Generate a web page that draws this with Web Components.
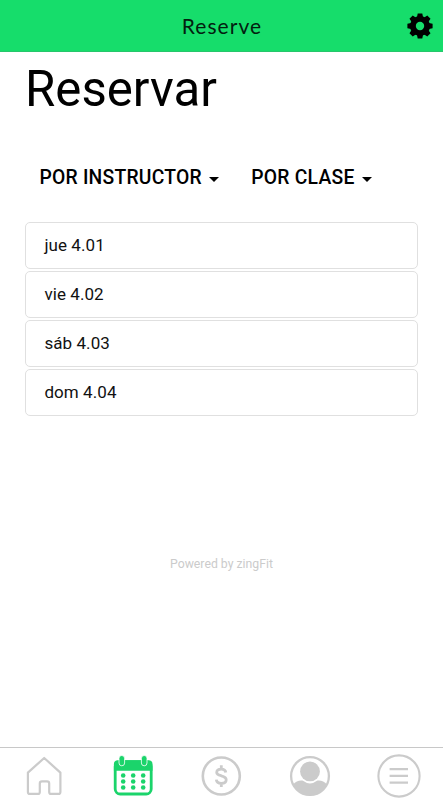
<!DOCTYPE html>
<html lang="es"><head><meta charset="utf-8"><title>Reserve</title>
<style>html,body{margin:0;height:100%;background:#fff}body{font-family:Roboto,sans-serif;color:#000;overflow:hidden}</style></head>
<body>
<booking-app></booking-app>
<script>
const define = (name, html) => customElements.define(name, class extends HTMLElement {
  constructor() {
    super();
    const t = document.createElement('template');
    t.innerHTML = html;
    this.attachShadow({mode: 'open'}).append(t.content.cloneNode(true));
  }
});

define('app-header', `<style>
:host{display:grid;grid-template-columns:40px 1fr 40px;align-items:center;height:52px;box-sizing:border-box;background:#16dd6b;border-bottom:1px solid #27c66c;flex:none}
.title{grid-column:2;text-align:center;font:400 21px/24px Lato,sans-serif;letter-spacing:1.05px;color:#03200f;padding-left:1px}
svg{display:block;justify-self:end;margin-right:10px}
</style><div class="title"><slot></slot></div>
<svg width="26" height="26" viewBox="-13 -13 26 26"><g fill="#000"><circle r="10"/>
<path d="M-3-9 -2.3-12.6H2.3L3-9V9L2.3 12.6H-2.3L-3 9ZM-9-3-12.6-2.3V2.3L-9 3H9L12.6 2.3V-2.3L9-3Z"/>
<path transform="rotate(45)" d="M-3-9 -2.3-12.6H2.3L3-9V9L2.3 12.6H-2.3L-3 9ZM-9-3-12.6-2.3V2.3L-9 3H9L12.6 2.3V-2.3L9-3Z"/></g><circle r="4.2" fill="#16dd6b"/></svg>`);

define('filter-menu', `<style>
:host{display:flex;align-items:center;font-size:19.3px;letter-spacing:.25px;line-height:24px;font-weight:500;white-space:nowrap}
i{width:0;height:0;margin:2px 0 0 7.3px;border:5px solid transparent;border-top:5px solid #000;border-bottom:0}
</style><slot></slot><i></i>`);

define('day-row', `<style>
:host{display:flex;align-items:center;box-sizing:border-box;height:47px;padding:0 0 1px 18.4px;border:1px solid #e0e0e0;border-radius:5px;font-size:17px;letter-spacing:.07px;line-height:20px;color:#111}
</style><slot></slot>`);

define('tab-bar', `<style>
:host{display:grid;grid-template-columns:repeat(5,1fr);height:53px;box-sizing:border-box;border-top:1px solid #c8c8c8;background:#fff;flex:none}
</style><slot></slot>`);

const icons = {
home: `<path d="M5.9 19.6 22.2 5 38.4 19.6V38.9Q38.4 40.9 36.4 40.9H29Q27.2 40.9 27.2 38.9V30.5Q27.2 28.3 25 28.3H20Q17.8 28.3 17.8 30.5V38.9Q17.8 40.9 16 40.9H7.9Q5.9 40.9 5.9 38.9Z" fill="none" stroke="#cbcbcb" stroke-width="2.2" stroke-linejoin="round"/>`,
calendar: `<g transform="translate(.2 -.7)"><rect x="4" y="9.3" width="36" height="32.4" rx="5" fill="none" stroke="#1bd46b" stroke-width="2.8"/><path d="M2.7 18.5V12Q2.7 8 6.7 8H37.3Q41.3 8 41.3 12V18.5Z" fill="#1bd46b"/>
<g fill="#1bd46b" stroke="#fff" stroke-width=".8"><rect x="7.8" y="3.2" width="5.6" height="10.3" rx="2.8"/><rect x="30.2" y="3.2" width="5.6" height="10.3" rx="2.8"/></g>
<g fill="#1bd46b">${[12,22,32].map(x=>[23.2,29.2,35.2].map(y=>`<circle cx="${x}" cy="${y}" r="2.3"/>`).join('')).join('')}</g></g>`,
dollar: `<circle cx="22.3" cy="23" r="18.5" fill="none" stroke="#cbcbcb" stroke-width="2.6"/><path d="M26.8 19.5C26.5 17.2 24.5 16.1 22.3 16.1C19.6 16.1 17.7 17.4 17.7 19.4C17.7 21.7 20 22.2 22.3 22.8C25.1 23.5 27.2 24.3 27.2 26.8C27.2 29.2 25.1 30.4 22.3 30.4C19.6 30.4 17.6 29.2 17.3 26.7M22.3 12.2V16M22.3 30.6V34" fill="none" stroke="#cbcbcb" stroke-width="2.8"/>`,
person: `<circle cx="22" cy="23" r="18.9" fill="none" stroke="#cbcbcb" stroke-width="2.3"/><circle cx="22" cy="18.4" r="9.9" fill="#cbcbcb"/><path d="M5 31.5Q9 27 14.5 27.6Q22 33.2 29.5 27.6Q35 27 39 31.5Q33 42.5 22 42.5Q11 42.5 5 31.5Z" fill="#cbcbcb"/>`,
menu: `<circle cx="22" cy="23" r="20.6" fill="none" stroke="#cbcbcb" stroke-width="2.1"/><path d="M12.6 16.2H31M12.6 22.9H31M12.6 29.7H31" stroke="#cbcbcb" stroke-width="2.2"/>`
};
customElements.define('tab-item', class extends HTMLElement {
  connectedCallback() {
    this.attachShadow({mode: 'open'}).innerHTML = `<style>:host{display:flex;justify-content:center;padding-top:5px}svg{display:block;overflow:visible}</style><svg width="44" height="46" viewBox="0 0 44 46">${icons[this.getAttribute('icon')]}</svg>`;
  }
});

define('booking-app', `<style>
:host{display:flex;flex-direction:column;height:100vh}
main{flex:1;display:flex;flex-direction:column;padding:7px 25px 0}
h1{margin:0;font-size:49.2px;line-height:60px;font-weight:400}
nav{display:flex;gap:32px;padding:47px 0 0 14.4px}
.days{display:grid;gap:2.1px;margin-top:32px}
footer{margin-top:140px;text-align:center;font-size:12.25px;line-height:16px;color:#cbcbcb}
</style>
<app-header>Reserve</app-header>
<main><h1>Reservar</h1>
<nav><filter-menu>POR INSTRUCTOR</filter-menu><filter-menu>POR CLASE</filter-menu></nav>
<div class="days"><day-row>jue 4.01</day-row><day-row>vie 4.02</day-row><day-row>sáb 4.03</day-row><day-row>dom 4.04</day-row></div>
<footer>Powered by zingFit</footer></main>
<tab-bar><tab-item icon="home"></tab-item><tab-item icon="calendar"></tab-item><tab-item icon="dollar"></tab-item><tab-item icon="person"></tab-item><tab-item icon="menu"></tab-item></tab-bar>`);
</script></body></html>
